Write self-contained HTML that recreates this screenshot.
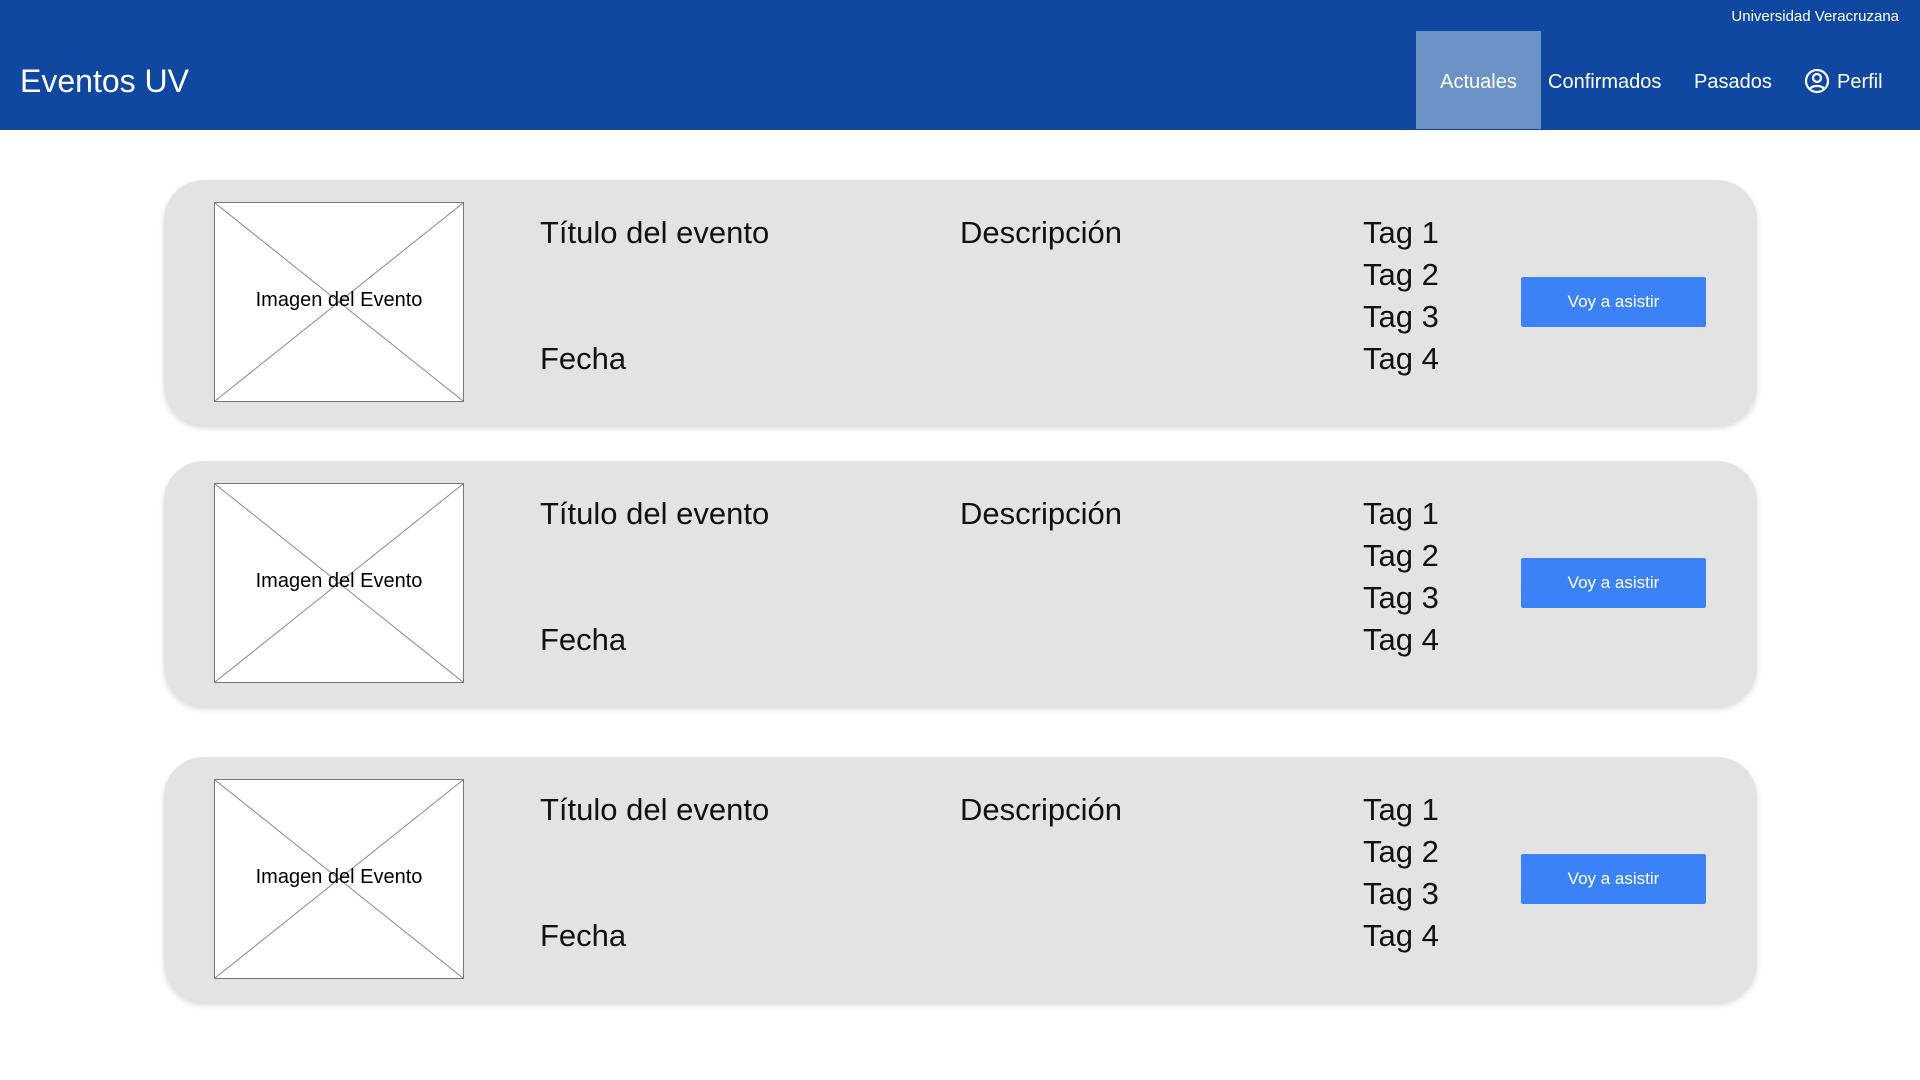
<!DOCTYPE html>
<html><head><meta charset="utf-8"><style>
body{margin:0;width:1920px;height:1080px;background:#fff;font-family:"Liberation Sans",sans-serif;position:relative;overflow:hidden}
.hdr{position:absolute;left:0;top:0;width:1920px;height:130px;background:#0f47a1;color:#fff}
.abs{position:absolute;white-space:nowrap}
.card{position:absolute;left:164px;width:1593px;height:245px;background:#e3e3e3;border-radius:40px;box-shadow:0 3px 6px rgba(0,0,0,.15)}
.img{position:absolute;left:50px;top:22px;width:248px;height:198px;background:#fff;border:1px solid #777}
.img span{position:absolute;left:0;right:0;top:86px;text-align:center;font-size:20px;color:#000}
.t{position:absolute;font-size:31px;color:#111;line-height:1}
.btn{position:absolute;left:1357px;top:97px;width:185px;height:50px;background:#3b82f6;color:#fff;font-size:17px;text-align:center;line-height:50px;border-radius:2px}
</style></head><body>
<div class="hdr">
<div class="abs" style="right:21px;top:8px;font-size:15px">Universidad Veracruzana</div>
<div class="abs" style="left:20px;top:63px;font-size:32px">Eventos UV</div>
<div class="abs" style="left:1416px;top:31px;width:125px;height:98px;background:#6d93c6"></div>
<div class="abs" style="left:1416px;top:71px;width:125px;text-align:center;font-size:20px">Actuales</div>
<div class="abs" style="left:1548px;top:71px;font-size:20px">Confirmados</div>
<div class="abs" style="left:1694px;top:71px;font-size:20px">Pasados</div>
<svg class="abs" style="left:1804px;top:68px" width="26" height="26" viewBox="0 0 26 26" fill="none" stroke="#fff" stroke-width="2.2"><circle cx="13" cy="13" r="11"/><circle cx="13" cy="10" r="4"/><path d="M6 21c2-4 12-4 14 0"/></svg>
<div class="abs" style="left:1837px;top:71px;font-size:20px">Perfil</div>
</div>
<div class="card" style="top:180px">
<div class="img"><svg width="248" height="198" style="position:absolute;left:0;top:0"><line x1="0" y1="0" x2="248" y2="198" stroke="#888"/><line x1="248" y1="0" x2="0" y2="198" stroke="#888"/></svg><span>Imagen del Evento</span></div>
<div class="t" style="left:376px;top:37px">Título del evento</div>
<div class="t" style="left:376px;top:163px">Fecha</div>
<div class="t" style="left:796px;top:37px">Descripción</div>
<div class="t" style="left:1199px;line-height:42px;top:32px">Tag 1<br>Tag 2<br>Tag 3<br>Tag 4</div>
<div class="btn">Voy a asistir</div>
</div>
<div class="card" style="top:461px">
<div class="img"><svg width="248" height="198" style="position:absolute;left:0;top:0"><line x1="0" y1="0" x2="248" y2="198" stroke="#888"/><line x1="248" y1="0" x2="0" y2="198" stroke="#888"/></svg><span>Imagen del Evento</span></div>
<div class="t" style="left:376px;top:37px">Título del evento</div>
<div class="t" style="left:376px;top:163px">Fecha</div>
<div class="t" style="left:796px;top:37px">Descripción</div>
<div class="t" style="left:1199px;line-height:42px;top:32px">Tag 1<br>Tag 2<br>Tag 3<br>Tag 4</div>
<div class="btn">Voy a asistir</div>
</div>
<div class="card" style="top:757px">
<div class="img"><svg width="248" height="198" style="position:absolute;left:0;top:0"><line x1="0" y1="0" x2="248" y2="198" stroke="#888"/><line x1="248" y1="0" x2="0" y2="198" stroke="#888"/></svg><span>Imagen del Evento</span></div>
<div class="t" style="left:376px;top:37px">Título del evento</div>
<div class="t" style="left:376px;top:163px">Fecha</div>
<div class="t" style="left:796px;top:37px">Descripción</div>
<div class="t" style="left:1199px;line-height:42px;top:32px">Tag 1<br>Tag 2<br>Tag 3<br>Tag 4</div>
<div class="btn">Voy a asistir</div>
</div>
</body></html>
